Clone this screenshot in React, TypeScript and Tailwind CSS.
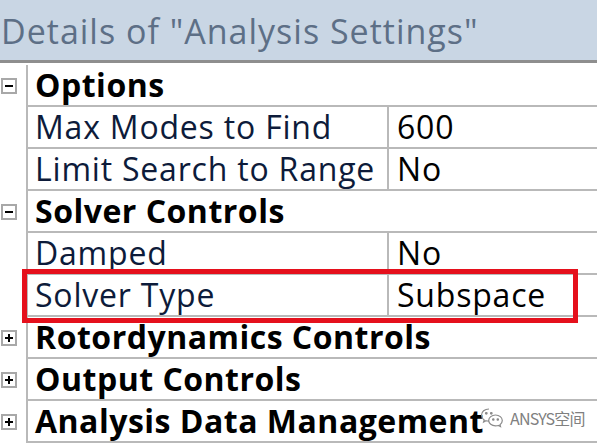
import React from 'react';

type Row =
  | { kind: 'group'; label: string; open: boolean }
  | { kind: 'prop'; label: string; value: string };

const rows: Row[] = [
  { kind: 'group', label: 'Options', open: true },
  { kind: 'prop', label: 'Max Modes to Find', value: '600' },
  { kind: 'prop', label: 'Limit Search to Range', value: 'No' },
  { kind: 'group', label: 'Solver Controls', open: true },
  { kind: 'prop', label: 'Damped', value: 'No' },
  { kind: 'prop', label: 'Solver Type', value: 'Subspace' },
  { kind: 'group', label: 'Rotordynamics Controls', open: false },
  { kind: 'group', label: 'Output Controls', open: false },
  { kind: 'group', label: 'Analysis Data Management', open: false },
];

function ToggleBox({ open }: { open: boolean }) {
  return (
    <div className="relative h-[16px] w-[16px] border-2 border-[#a8a8a8] bg-white">
      <div className="absolute left-[2px] top-[5px] h-[2px] w-[8px] bg-black" />
      {!open && <div className="absolute left-[5px] top-[2px] h-[8px] w-[2px] bg-black" />}
    </div>
  );
}

function WeChatMark() {
  return (
    <svg width="24" height="22" viewBox="0 0 24 22" fill="none" stroke="#8a8a8a" strokeWidth="1.2">
      <path d="M9 2C4.6 2 1.5 4.8 1.5 8.2c0 2 1 3.6 2.7 4.8L3.6 15l2.4-1.3c.9.3 1.9.4 3 .4" />
      <path d="M15.5 8c3.8 0 6.8 2.5 6.8 5.6 0 1.7-.9 3.1-2.3 4.1l.5 1.9-2.1-1.1c-.9.3-1.9.4-2.9.4-3.8 0-6.8-2.5-6.8-5.4S11.7 8 15.5 8z" />
      <circle cx="6.3" cy="6.3" r="0.8" fill="#8a8a8a" />
      <circle cx="11.3" cy="6.3" r="0.8" fill="#8a8a8a" />
      <circle cx="13.3" cy="12.5" r="0.7" fill="#8a8a8a" />
      <circle cx="17.8" cy="12.5" r="0.7" fill="#8a8a8a" />
    </svg>
  );
}

export default function App() {
  return (
    <div className="relative h-[445px] w-[597px] overflow-hidden bg-white font-['Open_Sans',sans-serif]">
      <div className="h-[60px] whitespace-nowrap bg-[#c9d6e4] pl-[1px] pt-[6px] text-[34px] leading-[50px] tracking-[1px] text-[#5d6f86]">
        Details of "Analysis Settings"
      </div>
      <div className="h-[3px] bg-[#8e8e8e]" />
      <div className="h-[2px]" />

      <div className="flex flex-col">
        {rows.map((row) => (
          <div key={row.label} className="flex h-[42px]">
            <div className="flex w-[26px] shrink-0 items-center pl-[1px]">
              {row.kind === 'group' && <ToggleBox open={row.open} />}
            </div>
            <div className="flex flex-1 border-b-2 border-l-2 border-[#b9b9b9]">
              {row.kind === 'group' ? (
                <div className="flex items-center whitespace-nowrap pl-[7px] text-[32px] font-bold tracking-[0.5px] text-black">
                  {row.label}
                </div>
              ) : (
                <>
                  <div className="flex w-[361px] shrink-0 items-center whitespace-nowrap border-r-2 border-[#b9b9b9] pl-[7px] text-[32px] tracking-[0.8px] text-[#0d1b3a]">
                    {row.label}
                  </div>
                  <div className="flex items-center pl-[8px] text-[32px] tracking-[0.8px] text-black">{row.value}</div>
                </>
              )}
            </div>
          </div>
        ))}
      </div>

      {/* highlight around the selected property */}
      <div className="absolute left-[22px] top-[269px] h-[54px] w-[556px] border-[5px] border-[#e5101c]" />

      <div className="absolute left-[480px] top-[406px] flex items-center gap-[6px]">
        <WeChatMark />
        <span className="font-['Noto_Sans_CJK_SC',sans-serif] text-[16px] tracking-[-0.8px] text-[#808080]">ANSYS空间</span>
      </div>
    </div>
  );
}
